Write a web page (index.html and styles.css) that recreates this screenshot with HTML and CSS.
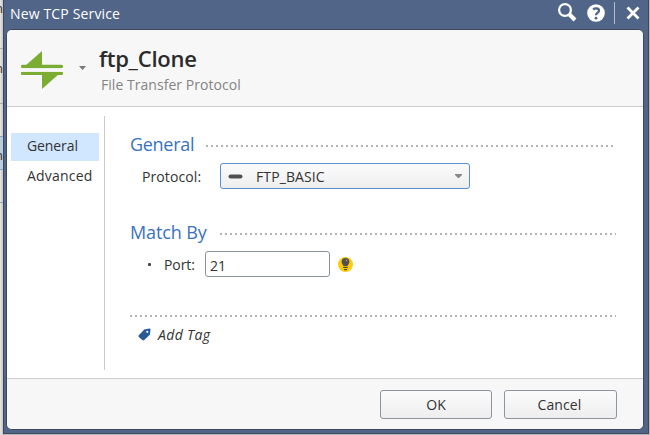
FILE: index.html
```html
<!DOCTYPE html>
<html lang="en">
<head>
<meta charset="utf-8">
<title>New TCP Service</title>
<link rel="stylesheet" href="styles.css">
</head>
<body>
<div class="backdrop">
  <div class="edge"><div class="row r1">n</div><div class="row r2">n</div><div class="row r3"></div><div class="row selected">n</div><div class="row r4"></div></div>
</div>
<main class="window">
  <header class="titlebar">
    <span class="caption">New TCP Service</span>
    <svg class="tools" width="86" height="28" viewBox="0 0 86 28">
      <circle cx="9" cy="10" r="5.9" fill="none" stroke="#fff" stroke-width="2.2"/>
      <path d="M13.500 14.500l5.500 5.500" fill="none" stroke="#fff" stroke-width="4"/>
      <circle cx="40" cy="13" r="8.8" fill="#fff"/>
      <path d="M37.2 9.6c1.5-1.6 5.8-1.7 5.8 1.1 0 2-3 2-3 4.6" fill="none" stroke="#506587" stroke-width="2.3"/>
      <circle cx="40" cy="18.2" r="1.4" fill="#506587"/>
      <path d="M58.5 2v22" stroke="#b4bdca"/>
      <path d="M71.5 7.5l11 11m0-11l-11 11" stroke="#fff" stroke-width="2.8"/>
    </svg>
  </header>
  <section class="panel">
    <header class="object">
      <svg class="service" width="42" height="38" viewBox="0 0 42 38">
        <path d="M1.5 15.5h39M1.5 22.4h39" stroke="#7bad32" stroke-width="3.3" stroke-linecap="round"/>
        <path d="M4 15L21 0v16zM21 22v16l17-15z" fill="#7bad32"/>
        <path d="M1 19h40" stroke="#f7f7f7" stroke-width="3.400"/>
      </svg>
      <svg class="arrow" width="7" height="4" viewBox="0 0 7 4"><path d="M0 0h7L3.5 4z" fill="#777"/></svg>
      <div class="names">
        <h1>ftp_Clone</h1>
        <p>File Transfer Protocol</p>
      </div>
    </header>
    <div class="body">
      <nav><a class="active">General</a><a class="advanced">Advanced</a></nav>
      <div class="content">
        <div class="heading"><h2 class="h-general">General</h2><i class="dots"></i></div>
        <div class="field protocol">
          <label>Protocol:</label>
          <div class="select">
            <svg width="15" height="5" viewBox="0 0 15 5"><rect x=".5" y=".5" width="14" height="4" rx="2" fill="#505050"/></svg>
            <span>FTP_BASIC</span>
            <svg class="caret" width="7" height="4" viewBox="0 0 7 4"><path d="M0 0h7v1L4 4H3L0 1z" fill="#888"/></svg>
          </div>
        </div>
        <div class="heading match"><h2 class="h-match">Match By</h2><i class="dots"></i></div>
        <div class="field port">
          <b class="bullet"></b>
          <label>Port:</label>
          <div class="input">21</div>
          <svg width="15" height="15" viewBox="0 0 15 15">
            <circle cx="7.5" cy="7.5" r="7.5" fill="#ffcb08"/>
            <path d="M7.5 1a3.9 3.9 0 0 1 3.9 3.9c0 2-1.8 2.7-1.9 4.3h-4C5.400 7.600 3.600 6.900 3.600 4.900A3.900 3.900 0 0 1 7.500 1z" fill="#505050"/>
            <path d="M5.200 10.500h4.600M6 12.700h3" stroke="#505050" stroke-width="1.200"/>
            <path d="M7.700 2.500l1.500 1.700" stroke="#b5ad90" stroke-width="1"/>
          </svg>
        </div>
        <i class="dots tag-line"></i>
        <div class="tag">
          <svg width="13" height="13" viewBox="0 0 13 13"><path d="M6.200 1.600L11.600.600q.900 0 .9.900L12 6.500 6.300 12q-1 .8-2 0L.8 9q-.7-1 0-1.800z" fill="#285a96"/><circle cx="9.300" cy="3.800" r="1.100" fill="#fff"/></svg>
          <span>Add Tag</span>
        </div>
      </div>
    </div>
    <footer><div class="button ok">OK</div><div class="button cancel">Cancel</div></footer>
  </section>
</main>
</body>
</html>
```
FILE: styles.css
```css
* { box-sizing: border-box; }
body { margin: 0; width: 650px; height: 435px; overflow: hidden; position: relative; font: 14px/20px "Open Sans", "Noto Sans", sans-serif; color: #333; }
.backdrop { position: absolute; inset: 0; background: #b9b9b9; }
.edge { width: 3px; height: 435px; overflow: hidden; background: linear-gradient(90deg, #e8e8e8, #c4c4c4); }
.row { border-bottom: 1px solid #aaa; overflow: hidden; text-indent: -5px; font-size: 13px; line-height: 14px; }
.r1 { height: 49px; padding-top: 1px; }
.r2 { height: 55px; padding-top: 12px; }
.r3 { height: 33px; border-color: #7fa5c8; }
.selected { height: 33px; padding-top: 11px; background: #b9cedd; border-color: #7fa5c8; }
.r4 { height: 33px; border-color: #7fa5c8; }
.window { position: relative; width: 646px; height: 434px; margin-left: 3px; padding: 0 4px 3px 2px; background: #506587; border: 1px solid #3e4857; border-top: 0; display: flex; flex-direction: column; }
.titlebar { height: 29px; flex: none; display: flex; justify-content: space-between; color: #fff; }
.caption { margin: 4px 0 0 4px; letter-spacing: .15px; }
.tools { flex: none; margin-right: 2px; }
.panel { width: 638px; height: 402px; border: 1px solid #3e4857; border-radius: 6px; background: #fff; overflow: hidden; display: flex; flex-direction: column; }
.object { height: 77px; flex: none; border-bottom: 1px solid #ccc; background: #f7f7f7; display: flex; }
.service { margin: 21px 0 0 14px; }
.arrow { margin: 36px 0 0 16px; }
.names { margin: 14px 0 0 13px; }
h1, h2, p { margin: 0; }
h1 { font-size: 22px; line-height: 28px; font-weight: 600; letter-spacing: -.25px; color: #2b2b2b; }
.names p { margin: 3px 0 0 2px; color: #848484; letter-spacing: .04px; }
.body { height: 271px; flex: none; display: flex; }
nav { margin-top: 9px; width: 98px; height: 254px; padding: 17px 5px 0 4px; border-right: 1px solid #ccc; }
nav a { display: block; height: 28px; line-height: 26px; padding-left: 16px; letter-spacing: -.1px; }
nav .active { background: #d1e7ff; }
nav .advanced { margin-top: 2px; letter-spacing: .2px; }
.content { width: 486px; margin: 25px 0 0 25px; }
.heading { height: 24px; display: flex; align-items: center; }
h2 { font-size: 18px; line-height: 24px; font-weight: 400; color: #3972c0; white-space: nowrap; letter-spacing: -.3px; flex: none; }
.h-general { width: 76px; }
.h-match { width: 90px; letter-spacing: -.1px; }
.dots { display: block; height: 2px; flex: 1; margin-top: 3px; background: repeating-linear-gradient(90deg, #b3b3b3 0 2px, transparent 2px 5px); }
.field { display: flex; }
.protocol { margin-top: 7px; padding-left: 12px; }
.protocol label { width: 78px; padding-top: 4px; letter-spacing: .1px; }
.select { width: 250px; height: 26px; border: 1px solid #5490d4; border-radius: 3px; background: linear-gradient(#fbfbfb, #eee); display: flex; align-items: center; padding: 0 7px; }
.select span { margin: 1px 0 0 13px; letter-spacing: .1px; }
.caret { margin-left: auto; }
.match { margin-top: 31px; }
.port { margin-top: 7px; align-items: center; }
.bullet { width: 3px; height: 3px; margin: 1px 13px 0 18px; border-radius: 1px; background: #444; }
.port label { width: 41px; padding-top: 1px; letter-spacing: -.1px; }
.input { width: 125px; height: 26px; border: 1px solid #8c9299; border-radius: 3px; padding: 4px; margin-right: 8px; }
.tag-line { margin-top: 38px; flex: none; }
.tag { display: flex; margin: 8px 0 0 8px; align-items: center; font-style: italic; }
.tag svg { position: relative; top: -1px; }
.tag span { margin-left: 7px; letter-spacing: .35px; }
footer { height: 52px; flex: none; border-top: 1px solid #ccc; background: #f7f7f7; display: flex; justify-content: flex-end; gap: 12px; padding: 11px 26px 0 0; }
.button { width: 112px; height: 29px; border: 1px solid #8d959f; border-radius: 3px; background: linear-gradient(#fbfbfb, #eee); text-align: center; line-height: 28px; }
.cancel { width: 113px; padding-right: 2px; letter-spacing: .1px; }
```
